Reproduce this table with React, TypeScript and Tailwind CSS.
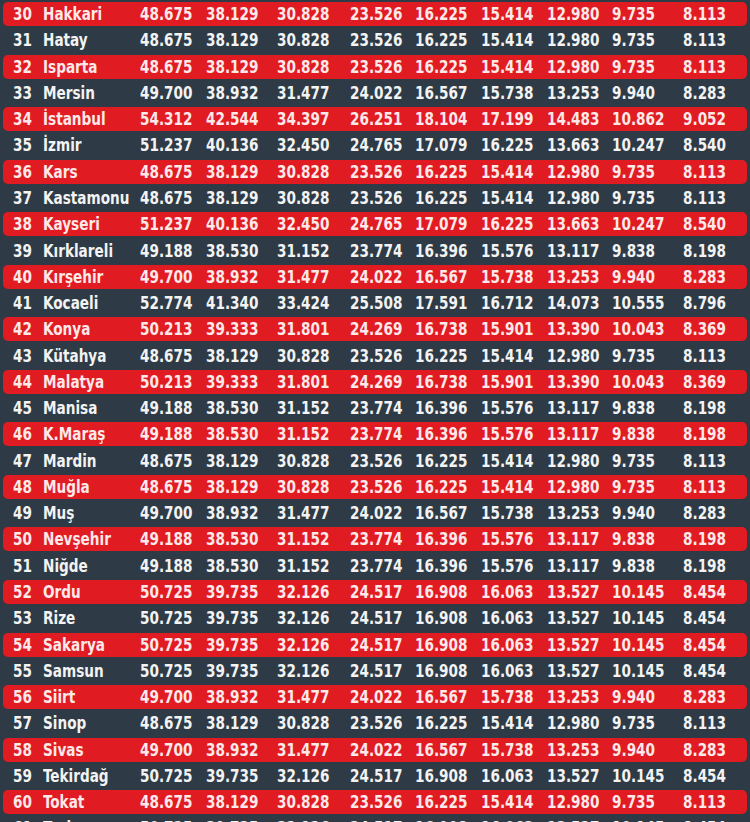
import React from "react";

const A = ["48.675", "38.129", "30.828", "23.526", "16.225", "15.414", "12.980", "9.735", "8.113"];
const B = ["49.700", "38.932", "31.477", "24.022", "16.567", "15.738", "13.253", "9.940", "8.283"];
const C = ["51.237", "40.136", "32.450", "24.765", "17.079", "16.225", "13.663", "10.247", "8.540"];
const D = ["49.188", "38.530", "31.152", "23.774", "16.396", "15.576", "13.117", "9.838", "8.198"];
const E = ["50.213", "39.333", "31.801", "24.269", "16.738", "15.901", "13.390", "10.043", "8.369"];
const F = ["50.725", "39.735", "32.126", "24.517", "16.908", "16.063", "13.527", "10.145", "8.454"];
const IST = ["54.312", "42.544", "34.397", "26.251", "18.104", "17.199", "14.483", "10.862", "9.052"];
const KOC = ["52.774", "41.340", "33.424", "25.508", "17.591", "16.712", "14.073", "10.555", "8.796"];

const rows: [number, string, string[]][] = [
  [30, "Hakkari", A],
  [31, "Hatay", A],
  [32, "Isparta", A],
  [33, "Mersin", B],
  [34, "İstanbul", IST],
  [35, "İzmir", C],
  [36, "Kars", A],
  [37, "Kastamonu", A],
  [38, "Kayseri", C],
  [39, "Kırklareli", D],
  [40, "Kırşehir", B],
  [41, "Kocaeli", KOC],
  [42, "Konya", E],
  [43, "Kütahya", A],
  [44, "Malatya", E],
  [45, "Manisa", D],
  [46, "K.Maraş", D],
  [47, "Mardin", A],
  [48, "Muğla", A],
  [49, "Muş", B],
  [50, "Nevşehir", D],
  [51, "Niğde", D],
  [52, "Ordu", F],
  [53, "Rize", F],
  [54, "Sakarya", F],
  [55, "Samsun", F],
  [56, "Siirt", B],
  [57, "Sinop", A],
  [58, "Sivas", B],
  [59, "Tekirdağ", F],
  [60, "Tokat", A],
  [61, "Trabzon", F],
];

function Cell({ children }: { children: React.ReactNode }) {
  return (
    <div className="whitespace-nowrap">
      <span className="inline-block origin-left scale-x-[0.84]">{children}</span>
    </div>
  );
}

export default function App() {
  return (
    <div className="w-[750px] h-[822px] overflow-hidden bg-[#2e3b46] font-['DejaVu_Sans_Condensed','DejaVu_Sans',sans-serif] font-bold text-[18px] leading-none">
      <div className="pt-px">
        {rows.map(([n, name, vals]) => {
          const red = n % 2 === 0;
          return (
            <div key={n} className="h-[26.27px] flex items-center px-[3px]">
              <div
                className={
                  red
                    ? "h-[24px] w-full rounded-[5px] bg-[#e11b22] text-[#fde9e9] grid grid-cols-[30px_97px_66px_71px_73px_65px_66px_66px_65px_71px_1fr] items-center pl-[10px]"
                    : "h-[24px] w-full text-[#f3f3f3] grid grid-cols-[30px_97px_66px_71px_73px_65px_66px_66px_65px_71px_1fr] items-center pl-[10px]"
                }
              >
                <Cell>{n}</Cell>
                <Cell>{name}</Cell>
                {vals.map((v, i) => (
                  <Cell key={i}>{v}</Cell>
                ))}
              </div>
            </div>
          );
        })}
      </div>
    </div>
  );
}
